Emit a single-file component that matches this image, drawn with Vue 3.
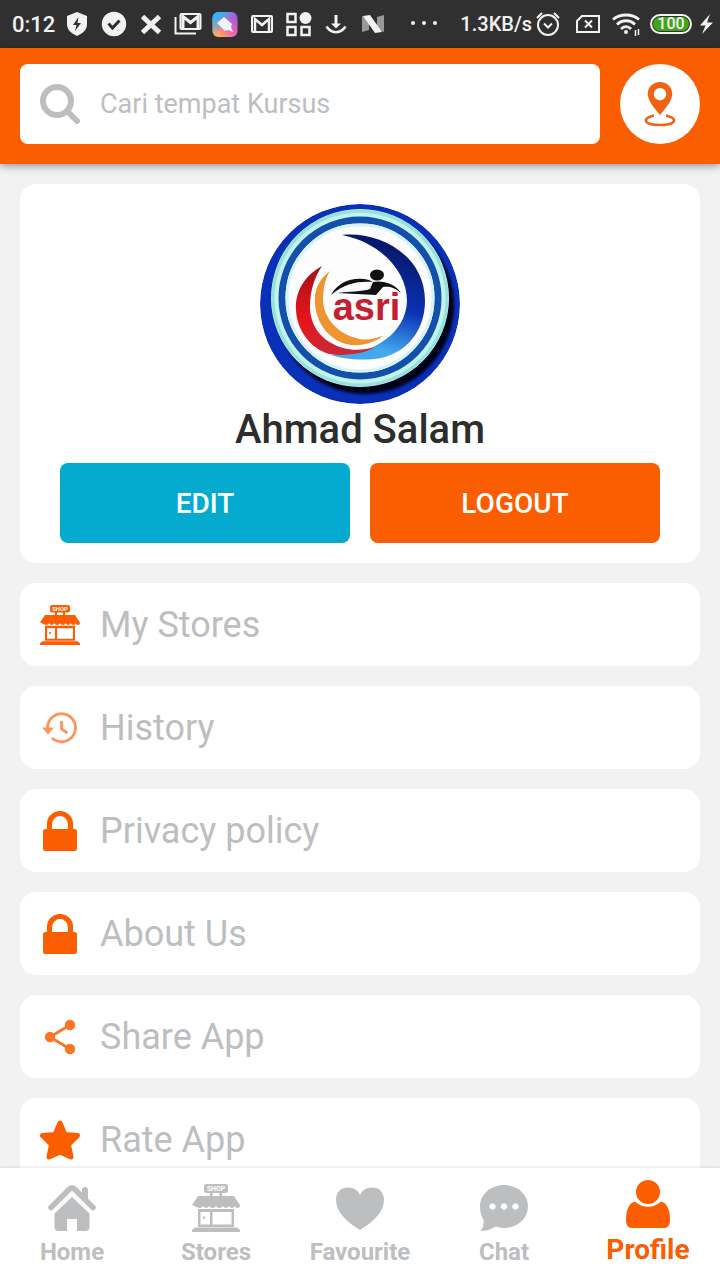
<script setup>
import { ref } from "vue";

const search = ref("");

const menu = [
  { name: "My Stores", icon: "shop" },
  { name: "History", icon: "history" },
  { name: "Privacy policy", icon: "lock" },
  { name: "About Us", icon: "lock" },
  { name: "Share App", icon: "share" },
  { name: "Rate App", icon: "star" },
];

const tabs = [
  { name: "Home", icon: "home" },
  { name: "Stores", icon: "shop" },
  { name: "Favourite", icon: "heart" },
  { name: "Chat", icon: "chat" },
  { name: "Profile", icon: "user", active: true },
];
</script>

<template>
  <div class="app">
    <!-- shared icons -->
    <svg class="sprite" aria-hidden="true">
      <symbol id="i-shop" viewBox="0 0 48 48">
        <rect x="12" y="0" width="24" height="9" rx="2.5" />
        <path d="M18 8h2.500v5H18zM27.500 8H30v5h-2.500z" />
        <path d="M6 12h36l6 9q0 3-2.500 3t-2.500-2q-1 2-3 2t-3-2q-1 2-3 2t-3-2q-1 2-3.500 2t-3.500-2q-1 2-3.500 2t-3.500-2q-1 2-3 2t-3-2q-1 2-3 2T0 21z" />
        <path fill-rule="evenodd" d="M6 25h36v18H6zM8.500 28v12.500H18V28zM20.500 28v12.500h19V28z" />
        <circle cx="12" cy="33.500" r="1.200" />
        <path d="M3 43.500h42l3 2.500v2H0v-2z" />
      </symbol>
      <symbol id="i-history" viewBox="0 0 40 40">
        <g opacity="0.650" fill="none" stroke="currentColor" stroke-width="2.800">
          <path d="M7.500 20A14 14 0 1 1 12 30" />
          <path d="M21.500 13v8l6 4" />
          <path d="M2 19.500h12l-6 7z" fill="currentColor" stroke="none" />
        </g>
      </symbol>
      <symbol id="i-lock" viewBox="0 0 40 40">
        <path d="M9.500 20V13a10.500 10.500 0 0 1 21 0v7" fill="none" stroke="currentColor" stroke-width="5.200" />
        <rect x="3" y="18" width="34" height="22" rx="2.500" />
      </symbol>
      <symbol id="i-share" viewBox="0 0 40 40">
        <g opacity="0.850">
          <path d="M30 8L10 20l20 12" fill="none" stroke="currentColor" stroke-width="2.800" />
          <circle cx="30" cy="8" r="5.200" />
          <circle cx="10" cy="20" r="5.200" />
          <circle cx="30" cy="32" r="5.200" />
        </g>
      </symbol>
      <symbol id="i-star" viewBox="0 0 40 40">
        <path
          d="M20 3l5 11.500 12.500 1-9 9 2.500 12.500-11-5-11 5 2.500-12.500-9-9 12.500-1z"
          stroke="currentColor"
          stroke-width="5"
          stroke-linejoin="round"
        />
      </symbol>
      <symbol id="i-home" viewBox="0 0 48 48">
        <path d="M3 23.500L21 5.500q3-3 6 0l18 18" fill="none" stroke="currentColor" stroke-width="5.500" stroke-linecap="round" />
        <path d="M34 12V6a3 3 0 0 1 6 0v11z" />
        <path d="M24 13l17.500 16.500V43q0 4-4 4H29V35H19v12h-8.500q-4 0-4-4V29.500z" />
      </symbol>
      <symbol id="i-heart" viewBox="0 0 48 48">
        <path d="M24 46C11 38 0 28 0 16 0 8 5 3.500 12 3.500c6 0 10 3 12 7.500 2-4.500 6-7.500 12-7.500 7 0 12 4.500 12 12.500 0 12-11 22-24 30z" />
      </symbol>
      <symbol id="i-chat" viewBox="0 0 48 48">
        <path fill-rule="evenodd" d="M24 1c13.300 0 24 9.500 24 21.500S37.300 44 24 44c-3 0-6-.6-8.500-1.500C11 45.500 6 47 .5 47 3 44 4 40 3.500 35.500 1 32 0 27 0 22.500 0 10.500 10.700 1 24 1zM12.500 19.300a3.200 3.200 0 1 0 .01 0zM24 19.300a3.200 3.200 0 1 0 .01 0zM35.500 19.300a3.200 3.200 0 1 0 .01 0z" />
      </symbol>
      <symbol id="i-user" viewBox="0 0 48 48">
        <circle cx="24" cy="12" r="12" />
        <path d="M11 21.500c7 7 19 7 26 0 6 1 9 9 9 18 0 6-2 8.500-7 8.500H9c-5 0-7-2.500-7-8.500 0-9 3-17 9-18z" />
      </symbol>
    </svg>

    <div class="status">
      <span class="clock">0:12</span>
      <div class="notes">
        <svg viewBox="0 0 28 28">
          <path d="M14 2l10 4v8c0 6-4 9-10 12C8 23 4 20 4 14V6z" />
          <path d="M15.500 7L10 15h3.500L12 21l6-8h-3.500z" fill="#303030" />
        </svg>
        <svg viewBox="0 0 28 28">
          <circle cx="14" cy="14" r="12.200" />
          <path d="M8.500 13.500l4 4.500 7-7.500" fill="none" stroke="#303030" stroke-width="3" />
        </svg>
        <svg viewBox="0 0 28 28">
          <path d="M5.500 6.500l17 16M22.500 6.500l-17 16" stroke="#f2f2f2" stroke-width="5" />
        </svg>
        <svg viewBox="0 0 28 28" fill="none" stroke="#f2f2f2">
          <rect x="6.500" y="4" width="20" height="15" rx="1" stroke-width="2" />
          <path d="M9 18V6.500l7.500 6 7.500-6V18" stroke-width="3" />
          <path d="M1.500 7v16.500H22" stroke-width="2" />
        </svg>
        <svg viewBox="0 0 28 28">
          <defs>
            <linearGradient id="paint" x1="0" y1="1" x2="1" y2="0">
              <stop offset="0" stop-color="#ffcb3c" />
              <stop offset=".45" stop-color="#f36aa5" />
              <stop offset="1" stop-color="#8b52ef" />
            </linearGradient>
            <linearGradient id="sky" x1="0" y1="0" x2="1" y2="1">
              <stop offset=".15" stop-color="#29baf5" />
              <stop offset=".55" stop-color="#29baf5" stop-opacity="0" />
            </linearGradient>
          </defs>
          <rect x="1.500" y="2" width="25" height="25" rx="6" fill="url(#paint)" />
          <rect x="1.500" y="2" width="25" height="25" rx="6" fill="url(#sky)" />
          <path d="M13 7l8 7-1 3 2 5-5-2-3 1-8-8z" fill="#eef4ff" />
        </svg>
        <svg viewBox="0 0 28 28" fill="none" stroke="#f2f2f2">
          <rect x="4" y="6" width="20" height="16" rx="1" stroke-width="2" />
          <path d="M7 21V9l7 6 7-6v12" stroke-width="2.500" />
        </svg>
        <svg viewBox="0 0 28 28">
          <path d="M2.500 4h8v8h-8zM2.500 17h8v8h-8zM16.500 17h8v8h-8z" fill="none" stroke="#f2f2f2" stroke-width="2.500" />
          <circle cx="20.500" cy="8" r="6" />
        </svg>
        <svg viewBox="0 0 28 28">
          <path d="M12.500 5h3v8.500H19l-5 5-5-5h3.500z" />
          <path d="M4.500 16.500c5 7.500 14 7.500 19 0" fill="none" stroke="#f2f2f2" stroke-width="2.500" />
        </svg>
        <svg viewBox="0 0 28 28">
          <path d="M3 6v16l7-2V9zM25 5v17l-7-3V7z" fill="#999" />
          <path d="M4 6l7-1 12 17-7 1z" />
        </svg>
      </div>
      <svg class="dots" viewBox="0 0 28 28">
        <circle cx="3" cy="13" r="2" />
        <circle cx="14" cy="13" r="2" />
        <circle cx="25" cy="13" r="2" />
      </svg>
      <div class="system">
        <span>1.3KB/s</span>
        <svg class="alarm" viewBox="0 0 28 28" fill="none" stroke="#f2f2f2" stroke-width="2">
          <circle cx="14" cy="15" r="10" />
          <path d="M10 13.500l4 4 4-4M3 8l5-5M25 8l-5-5" />
        </svg>
        <svg viewBox="0 0 28 28" fill="none" stroke="#f2f2f2" stroke-width="2">
          <path d="M8 6h17v16H3V11zM11 10.500l7 7M18 10.500l-7 7" />
        </svg>
        <svg viewBox="0 0 28 28" fill="none" stroke="#f2f2f2" stroke-width="2.800">
          <path d="M1 9.500c7-6 19-6 26 0M5 14.500c5-5 13-5 18 0M9 19c3-3 7-3 10 0" />
          <circle cx="14" cy="22" r="2" fill="#f2f2f2" stroke="none" />
          <path d="M23.500 20v6M26.500 19v6" stroke-width="1.500" />
        </svg>
        <span class="battery">100</span>
        <svg class="bolt" viewBox="0 0 16 28">
          <path d="M12 4L2 15.500h5.500L4 24l11-11.500H9z" />
        </svg>
      </div>
    </div>

    <header class="top">
      <label class="search">
        <svg viewBox="0 0 40 40" fill="none" stroke="#bcbec0" aria-hidden="true">
          <circle cx="17" cy="17" r="14" stroke-width="6" />
          <path d="M28 28l9 9" stroke-width="6" stroke-linecap="round" />
        </svg>
        <input v-model="search" type="text" placeholder="Cari tempat Kursus" aria-label="Cari tempat Kursus" />
      </label>
      <button class="pin" type="button" aria-label="Lokasi">
        <svg viewBox="0 0 40 48">
          <path fill-rule="evenodd" d="M20 2c7 0 12.300 5 12.300 12 0 6-6.300 14-12.300 21C14 28 7.700 20 7.700 14 7.700 7 13 2 20 2zm0 6a6.200 6.200 0 1 0 .01 0z" />
          <path d="M14 35.500c-12 2.500-11 9.500 6 9.500s18-7 6-9.500" fill="none" stroke="currentColor" stroke-width="2.500" />
        </svg>
      </button>
    </header>

    <main class="content">
      <section class="card">
        <svg class="avatar" viewBox="0 0 200 200" role="img" aria-label="Ahmad Salam">
          <defs>
            <linearGradient id="swoosh" x1="0.600" y1="0" x2="0.400" y2="1">
              <stop offset="0" stop-color="#06145e" />
              <stop offset=".55" stop-color="#0b32b4" />
              <stop offset=".9" stop-color="#43a9ee" />
            </linearGradient>
            <linearGradient id="flame" x1="0" y1="0" x2="0" y2="1">
              <stop offset="0" stop-color="#a5121c" />
              <stop offset=".6" stop-color="#e8141b" />
              <stop offset="1" stop-color="#c92a38" />
            </linearGradient>
            <filter id="soft"><feGaussianBlur stdDeviation="1.500" /></filter>
            <clipPath id="disc"><circle cx="100" cy="100" r="100" /></clipPath>
          </defs>
          <g clip-path="url(#disc)">
            <circle cx="100" cy="100" r="100" fill="#0a2fb9" />
            <circle cx="105" cy="101" r="89" fill="#000413" filter="url(#soft)" />
            <circle cx="100" cy="94" r="89" fill="#c3f3ec" />
            <circle cx="100" cy="94" r="87" fill="none" stroke="#93e2dc" stroke-width="3" />
            <circle cx="100" cy="94" r="78" fill="#fdfdfd" stroke="#1250ab" stroke-width="7" />
            <circle cx="100" cy="94" r="73" fill="none" stroke="#d5f4fa" stroke-width="3" />
          </g>
          <path d="M82 31C115 27 165 48 165 97c0 33-23 58-57 58.500-16 .5-28-1.500-37-4.500 41 1 75-21 76-54 0-32-29-59-65-66z" fill="url(#swoosh)" />
          <path d="M62 62C44 72 35 88 36 106c1 24 20 45 42 45 14 0 28-2 37-8-10 3-22 4-32 1-21-6-33-22-33-41 0-17 5-31 12-41z" fill="url(#flame)" />
          <path d="M70 67c-12 9-16 20-15 32 1 21 16 40 37 42 12 1 23-3 31-9-10 3-18 5-27 2-19-5-32-20-33-37 0-12 2-22 7-30z" fill="#ee9430" />
          <ellipse cx="117" cy="71" rx="7" ry="5.500" fill="#111" />
          <path d="M71 91c7-14 24-19 38-15l4 2c-14-1-28 1-42 13z" fill="#111" />
          <path d="M77 89c12-2 25-1 33-4l3-7c8-2 22 1 28 11-7-6-12-7-18-6l-7 8z" fill="#111" />
          <text x="106.500" y="116" text-anchor="middle" class="brand">asri</text>
        </svg>
        <h1>Ahmad Salam</h1>
        <div class="actions">
          <button type="button" class="btn edit">EDIT</button>
          <button type="button" class="btn logout">LOGOUT</button>
        </div>
      </section>

      <a v-for="item in menu" :key="item.name" href="#" class="row">
        <svg viewBox="0 0 48 48" aria-hidden="true">
          <use :href="'#i-' + item.icon" />
          <text v-if="item.icon === 'shop'" x="24" y="7" text-anchor="middle" class="sign">SHOP</text>
        </svg>
        {{ item.name }}
      </a>
    </main>

    <nav class="tabs">
      <a v-for="tab in tabs" :key="tab.name" href="#" class="tab" :class="{ active: tab.active }">
        <svg viewBox="0 0 48 48" aria-hidden="true">
          <use :href="'#i-' + tab.icon" />
          <text v-if="tab.icon === 'shop'" x="24" y="7" text-anchor="middle" class="sign">SHOP</text>
        </svg>
        <span>{{ tab.name }}</span>
      </a>
    </nav>
  </div>
</template>

<style>
body {
  margin: 0;
  background: #f2f2f2;
}
</style>

<style scoped>
.app {
  display: flex;
  flex-direction: column;
  height: 100vh;
  font-family: Roboto, "Noto Sans", sans-serif;
  background: #f2f2f2;
}

svg {
  display: block;
  flex: none;
  fill: currentColor;
}

svg[fill="none"] {
  fill: none;
}

.sprite {
  position: absolute;
  width: 0;
  height: 0;
}

.sign {
  fill: #fff;
  font-size: 7px;
  font-weight: 700;
}

.status {
  display: flex;
  align-items: center;
  flex: none;
  height: 48px;
  padding: 0 6px 0 12px;
  background: #303030;
  color: #f2f2f2;
  font-size: 22px;
  font-weight: 500;
}

.status svg {
  width: 28px;
  height: 28px;
}

.notes {
  display: flex;
  gap: 9px;
  margin-left: 8px;
}

.status .dots {
  margin: 0 auto;
}

.system {
  display: flex;
  align-items: center;
  gap: 10px;
  font-size: 20px;
}

.system .alarm {
  margin: 0 2px 0 -8px;
}

.battery {
  box-sizing: border-box;
  width: 42px;
  height: 20px;
  border: 2px solid #f2f2f2;
  border-radius: 10px;
  background: #43a51c;
  box-shadow: inset 0 0 0 1px #303030;
  font-size: 16px;
  line-height: 16px;
  text-align: center;
}

.status .bolt {
  width: 16px;
  margin-left: -4px;
}

.top {
  position: relative;
  z-index: 1;
  display: flex;
  gap: 20px;
  flex: none;
  padding: 16px 20px 20px;
  background: #fb5e00;
  box-shadow: 0 2px 8px rgba(0, 0, 0, 0.4);
}

.search {
  display: flex;
  align-items: center;
  gap: 20px;
  flex: 1;
  min-width: 0;
  height: 80px;
  padding: 0 20px;
  box-sizing: border-box;
  border-radius: 8px;
  background: #fff;
}

.search svg {
  width: 40px;
  height: 40px;
}

.search input {
  flex: 1;
  min-width: 0;
  padding: 0;
  border: 0;
  outline: 0;
  background: none;
  color: #555;
  font: inherit;
  font-size: 27px;
}

.search input::placeholder {
  color: #bcbec0;
  opacity: 1;
}

.pin {
  display: flex;
  align-items: center;
  justify-content: center;
  width: 80px;
  height: 80px;
  padding: 0;
  border: 0;
  border-radius: 50%;
  background: #fff;
  color: #f26011;
}

.pin svg {
  width: 40px;
  height: 48px;
}

.content {
  display: flex;
  flex-direction: column;
  gap: 20px;
  flex: 1;
  min-height: 0;
  padding: 20px;
  overflow-y: auto;
  scrollbar-width: none;
}

.card {
  display: flex;
  flex-direction: column;
  align-items: center;
  flex: none;
  padding: 20px 40px;
  border-radius: 16px;
  background: #fff;
}

.avatar {
  width: 200px;
  height: 200px;
}

.brand {
  fill: #c4202f;
  font-family: "Liberation Sans", sans-serif;
  font-size: 38px;
  font-weight: 700;
}

h1 {
  margin: 0 0 7px;
  color: #2d2d2d;
  font-size: 40px;
  font-weight: 500;
  line-height: 52px;
}

.actions {
  display: flex;
  gap: 20px;
  width: 100%;
}

.btn {
  flex: 1;
  height: 80px;
  border: 0;
  border-radius: 8px;
  color: #fff;
  font: inherit;
  font-size: 28px;
  font-weight: 500;
}

.edit {
  background: #05abcf;
}

.logout {
  background: #fb5e00;
}

.row {
  display: flex;
  align-items: center;
  gap: 20px;
  flex: none;
  height: 83px;
  padding: 0 20px;
  border-radius: 16px;
  background: #fff;
  color: #bcbec0;
  font-size: 36px;
  text-decoration: none;
}

.row svg {
  width: 40px;
  height: 40px;
  color: #fb5e00;
}

.tabs {
  position: relative;
  display: flex;
  flex: none;
  height: 112px;
  background: #fff;
  box-shadow: 0 0 4px rgba(0, 0, 0, 0.15);
}

.tab {
  display: flex;
  flex-direction: column;
  align-items: center;
  gap: 4px;
  flex: 1;
  padding-top: 16px;
  color: #bcbec0;
  font-size: 24px;
  font-weight: 700;
  line-height: 32px;
  text-decoration: none;
}

.tab svg {
  width: 48px;
  height: 48px;
}

.tab.active {
  gap: 6px;
  padding-top: 12px;
  color: #fb5e00;
  font-size: 28px;
}
</style>
